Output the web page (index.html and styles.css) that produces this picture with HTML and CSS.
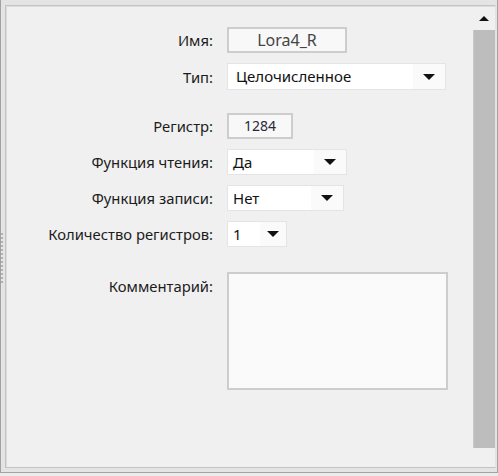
FILE: index.html
```html
<!DOCTYPE html>
<html lang="ru">

<head>
    <meta charset="UTF-8">
    <meta name="viewport" content="width=device-width, initial-scale=1.0">
    <title>Регистр</title>
    <link rel="stylesheet" href="styles.css">
</head>

<body>

    <div class="window">
        <div class="grip"></div>
        <div class="panel">
            <form class="form">
                <div class="row">
                    <label class="label" for="name">Имя:</label>
                    <div class="field field-name" id="name">Lora4_R</div>
                </div>
                <div class="row">
                    <span class="label">Тип:</span>
                    <div class="select select-type">
                        <span class="select-value">Целочисленное</span>
                        <span class="select-arrow"></span>
                    </div>
                </div>
                <div class="row row-spaced">
                    <label class="label" for="register">Регистр:</label>
                    <div class="field field-register" id="register">1284</div>
                </div>
                <div class="row">
                    <span class="label">Функция чтения:</span>
                    <div class="select select-read">
                        <span class="select-value">Да</span>
                        <span class="select-arrow"></span>
                    </div>
                </div>
                <div class="row">
                    <span class="label">Функция записи:</span>
                    <div class="select select-write">
                        <span class="select-value">Нет</span>
                        <span class="select-arrow"></span>
                    </div>
                </div>
                <div class="row">
                    <span class="label">Количество регистров:</span>
                    <div class="select select-count">
                        <span class="select-value">1</span>
                        <span class="select-arrow"></span>
                    </div>
                </div>
                <div class="row row-comment">
                    <label class="label" for="comment">Комментарий:</label>
                    <div class="field field-comment" id="comment"></div>
                </div>
            </form>

            <div class="scrollbar">
                <div class="scroll-up"></div>
                <div class="scroll-thumb"></div>
            </div>
        </div>
    </div>

</body>

</html>
```

FILE: styles.css
```css
body {
    margin: 0;
    width: 498px;
    height: 476px;
    background-color: #ececec;
    font-family: 'Noto Sans', 'Open Sans', sans-serif;
    color: #1e1e1e;
}

.window {
    position: relative;
    width: 498px;
    height: 473px;
    box-sizing: border-box;
    padding: 5px 1px 4px 4px;
    background-color: #e4e4e4;
    border: 1px solid #a2a2a2;
    border-top: none;
}

/* resize grip on the left edge */
.grip {
    position: absolute;
    left: 0;
    top: 233px;
    width: 2px;
    height: 50px;
    background: repeating-linear-gradient(to bottom, #b0b0b0 0, #b0b0b0 2px, #e8e8e8 2px, #e8e8e8 4px);
}

.panel {
    display: flex;
    height: 100%;
    box-sizing: border-box;
    background-color: #f0f0f0;
    border: 1px solid #c4c4c4;
    border-right-color: #e2e2e2;
    box-shadow: inset 1px 1px 0 #dcdcdc;
}

.form {
    flex: 1;
    margin: 0;
    padding-top: 21px;
}

.row {
    display: flex;
    align-items: center;
    margin-bottom: 10px;
}

/* sibling margins collapse, so these are the full gaps */
.row-spaced {
    margin-top: 23px;
}

.row-comment {
    align-items: flex-start;
    margin-top: 25px;
}

.label {
    width: 207px;
    margin-right: 14px;
    text-align: right;
    font-size: 14.8px;
    color: #1c1c1c;
}

.row-comment .label {
    padding-top: 4px;
}

.field {
    box-sizing: border-box;
    height: 26px;
    background-color: #f8f8f8;
    border: 2px solid #cdcdcd;
    text-align: center;
    line-height: 22px;
    color: #444;
}

.field-name {
    width: 120px;
    font-size: 16px;
}

.field-register {
    width: 66px;
    font-size: 14px;
    color: #2a2a3a;
}

.field-comment {
    width: 221px;
    height: 118px;
    background-color: #fafafa;
}

.select {
    display: flex;
    box-sizing: border-box;
    height: 26px;
    background-color: #fafafa;
    border: 1px solid #e4e4e4;
    font-size: 15px;
    color: #111;
}

.select-value {
    flex: 1;
    padding-left: 5px;
    line-height: 24px;
    background-color: #fff;
}

.select-arrow {
    display: flex;
    align-items: center;
    justify-content: center;
    width: 32px;
}

.select-arrow::after {
    content: "";
    border-left: 6px solid transparent;
    border-right: 6px solid transparent;
    border-top: 6px solid #111;
}

.select-type {
    width: 219px;
    height: 27px;
}

.select-type .select-value {
    padding-left: 8px;
}

.select-read {
    width: 120px;
}

.select-write {
    width: 117px;
}

.select-count {
    width: 60px;
}

.select-count .select-arrow {
    width: 26px;
}

.scrollbar {
    display: flex;
    flex-direction: column;
    align-items: center;
    width: 22px;
}

.scroll-up {
    margin-top: 10px;
    margin-bottom: 9px;
    border-left: 5px solid transparent;
    border-right: 5px solid transparent;
    border-bottom: 5px solid #111;
}

.scroll-thumb {
    width: 22px;
    height: 418px;
    box-sizing: border-box;
    background-color: #bdbdbd;
    border-left: 1px solid #cacaca;
}
```
